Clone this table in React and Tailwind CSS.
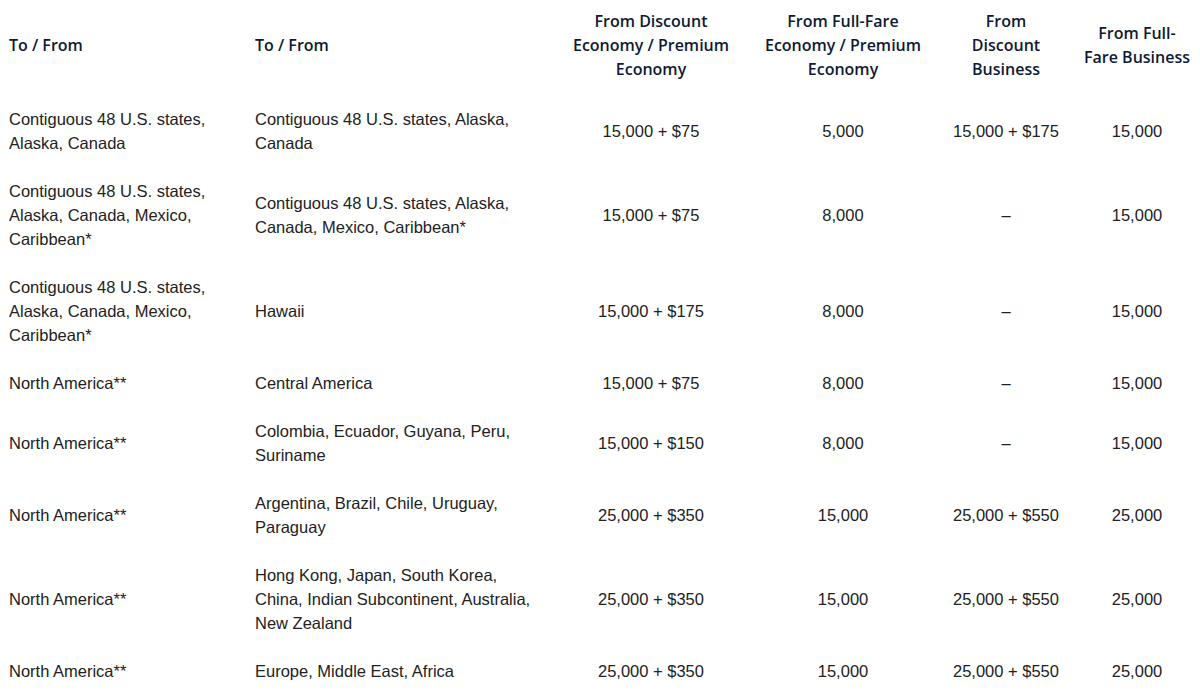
import React from "react";

const rows = [
  ["Contiguous 48 U.S. states, Alaska, Canada", "Contiguous 48 U.S. states, Alaska, Canada", "15,000 + $75", "5,000", "15,000 + $175", "15,000"],
  ["Contiguous 48 U.S. states, Alaska, Canada, Mexico, Caribbean*", "Contiguous 48 U.S. states, Alaska, Canada, Mexico, Caribbean*", "15,000 + $75", "8,000", "–", "15,000"],
  ["Contiguous 48 U.S. states, Alaska, Canada, Mexico, Caribbean*", "Hawaii", "15,000 + $175", "8,000", "–", "15,000"],
  ["North America**", "Central America", "15,000 + $75", "8,000", "–", "15,000"],
  ["North America**", "Colombia, Ecuador, Guyana, Peru, Suriname", "15,000 + $150", "8,000", "–", "15,000"],
  ["North America**", "Argentina, Brazil, Chile, Uruguay, Paraguay", "25,000 + $350", "15,000", "25,000 + $550", "25,000"],
  ["North America**", "Hong Kong, Japan, South Korea, China, Indian Subcontinent, Australia, New Zealand", "25,000 + $350", "15,000", "25,000 + $550", "25,000"],
  ["North America**", "Europe, Middle East, Africa", "25,000 + $350", "15,000", "25,000 + $550", "25,000"],
];

const headers = [
  "To / From",
  "To / From",
  "From Discount Economy / Premium Economy",
  "From Full-Fare Economy / Premium Economy",
  "From Discount Business",
  "From Full-Fare Business",
];

const padX = [
  "pl-[9px] pr-[9px] text-left",
  "pl-[9px] pr-[20px] text-left",
  "px-[9px] text-center",
  "px-[9px] text-center",
  "px-[9px] text-center",
  "pl-[16px] pr-[10px] text-center",
];

export default function App() {
  return (
    <div className="w-[1200px] h-[695px] overflow-hidden bg-white">
      <table className="table-fixed w-[1200px] border-collapse">
        <colgroup>
          <col className="w-[246px]" />
          <col className="w-[314px]" />
          <col className="w-[182px]" />
          <col className="w-[202px]" />
          <col className="w-[124px]" />
          <col className="w-[132px]" />
        </colgroup>
        <thead>
          <tr>
            {headers.map((h, i) => (
              <th
                key={i}
                className={`${padX[i]} pt-[9px] pb-[14px] align-middle font-semibold text-[16px] leading-[24px] text-[#0e1a33] font-[family-name:'Open_Sans',sans-serif]`}
              >
                {h}
              </th>
            ))}
          </tr>
        </thead>
        <tbody>
          {rows.map((r, ri) => (
            <tr key={ri}>
              {r.map((c, ci) => (
                <td
                  key={ci}
                  className={`${padX[ci]} py-[12px] align-middle text-[16.5px] leading-[24px] text-[#222222] font-[family-name:'Liberation_Sans',Arial,sans-serif]`}
                >
                  {c}
                </td>
              ))}
            </tr>
          ))}
        </tbody>
      </table>
    </div>
  );
}
